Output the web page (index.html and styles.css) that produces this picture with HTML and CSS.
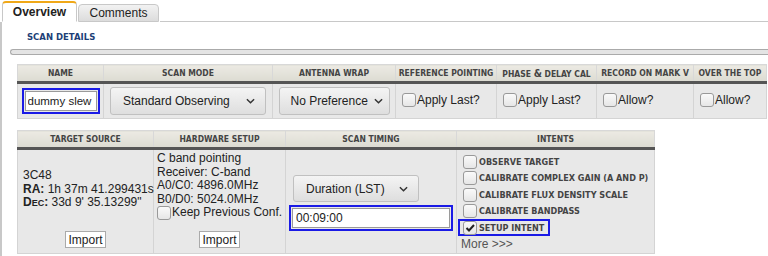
FILE: index.html
```html
<!DOCTYPE html>
<html lang="en">
<head>
  <meta charset="UTF-8">
  <title>Scan Details</title>
  <link rel="stylesheet" href="styles.css">
</head>
<body>
  <div class="tabs">
    <div class="tab active">Overview</div>
    <div class="tab">Comments</div>
    <div class="tab-rest"></div>
  </div>

  <div class="panel">
    <h2 class="section-title">SCAN DETAILS</h2>
    <div class="rule"></div>

    <table class="grid grid-top">
      <colgroup>
        <col style="width:86px"><col style="width:169px"><col style="width:123px"><col style="width:101px">
        <col style="width:100px"><col style="width:97px"><col style="width:73px">
      </colgroup>
      <tr>
        <th>Name</th>
        <th>Scan Mode</th>
        <th>Antenna Wrap</th>
        <th>Reference Pointing</th>
        <th>Phase <span class="amp">&amp;</span> Delay Cal</th>
        <th>Record on Mark V</th>
        <th>Over the Top</th>
      </tr>
      <tr class="row-top">
        <td class="center">
          <span class="focus"><input class="text name-input" type="text" value="dummy slew"></span>
        </td>
        <td class="center"><span class="select wide">Standard Observing <svg class="chev" viewBox="0 0 10 6"><polyline points="1,1 5,5 9,1"/></svg></span></td>
        <td class="center"><span class="select narrow">No Preference <svg class="chev" viewBox="0 0 10 6"><polyline points="1,1 5,5 9,1"/></svg></span></td>
        <td class="opt"><label class="check"><span class="box"></span>Apply Last?</label></td>
        <td class="opt"><label class="check"><span class="box"></span>Apply Last?</label></td>
        <td class="opt"><label class="check"><span class="box"></span>Allow?</label></td>
        <td class="opt"><label class="check"><span class="box"></span>Allow?</label></td>
      </tr>
    </table>

    <table class="grid grid-bottom">
      <colgroup>
        <col style="width:136px"><col style="width:132px"><col style="width:171px"><col style="width:198px">
      </colgroup>
      <tr>
        <th>Target Source</th>
        <th>Hardware Setup</th>
        <th>Scan Timing</th>
        <th>Intents</th>
      </tr>
      <tr class="row-bottom">
        <td>
          <div class="cell-col">
            <div class="info source">
              3C48<br>
              <b>RA:</b> 1h 37m 41.299431s<br>
              <b>D<span class="sc">EC</span>:</b> 33d 9' 35.13299"
            </div>
            <button class="import">Import</button>
          </div>
        </td>
        <td>
          <div class="cell-col">
            <div class="info">
              C band pointing<br>
              Receiver: C-band<br>
              A0/C0: 4896.0MHz<br>
              B0/D0: 5024.0MHz<br>
              <label class="check"><span class="box"></span>Keep Previous Conf.</label>
            </div>
            <button class="import">Import</button>
          </div>
        </td>
        <td>
          <div class="timing">
            <span class="select timing-select">Duration (LST) <svg class="chev" viewBox="0 0 10 6"><polyline points="1,1 5,5 9,1"/></svg></span>
            <span class="focus time-focus"><input class="text time-input" type="text" value="00:09:00"></span>
          </div>
        </td>
        <td>
          <ul class="intents">
            <li><span class="box"></span>Observe Target</li>
            <li><span class="box"></span>Calibrate Complex Gain (A and P)</li>
            <li><span class="box"></span>Calibrate Flux Density Scale</li>
            <li><span class="box"></span>Calibrate Bandpass</li>
            <li class="selected"><span class="box checked"><svg viewBox="0 0 12 12"><polyline points="2.5,6 5,8.5 10,3"/></svg></span>Setup Intent</li>
          </ul>
          <div class="more">More &gt;&gt;&gt;</div>
        </td>
      </tr>
    </table>
  </div>
</body>
</html>
```

FILE: styles.css
```css
body {
  margin: 0;
  font-family: 'Liberation Sans', Arial, sans-serif;
  font-size: 12px;
  color: #222;
  background: #fff;
  width: 768px;
  height: 256px;
  overflow: hidden;
}

/* tabs */
.tabs {
  display: flex;
  align-items: flex-end;
  height: 22px;
  padding-left: 2px;
}
.tab {
  box-sizing: border-box;
  width: 81px;
  height: 18px;
  line-height: 17px;
  border: 1px solid #c8c8c8;
  border-radius: 4px 4px 0 0;
  background: linear-gradient(#f2f2f2, #dcdcdc);
  font-size: 12px;
  color: #222;
  text-align: center;
  margin-right: 1px;
}
.tab.active {
  width: 75px;
  height: 21px;
  line-height: 19px;
  background: #fff;
  border-top: 2px solid #f0a818;
  border-bottom: 1px solid #fff;
  font-weight: bold;
}
.tab-rest {
  flex: 1;
  border-bottom: 1px solid #c8c8c8;
}

.panel {
  border-left: 2px solid #c8c8c8;
  height: 234px;
}

.section-title {
  margin: 0;
  padding: 8px 0 0 25px;
  height: 14px;
  line-height: 14px;
  font-family: 'DejaVu Sans', sans-serif;
  font-size: 8.5px;
  font-weight: bold;
  color: #1d3f77;
}

.rule {
  margin: 5px 0 0 8px;
  height: 4px;
  border: 1px solid #aaa;
  border-right: none;
  border-radius: 3px 0 0 3px;
  background: #e4e4e4;
}

/* tables */
.grid {
  border-collapse: collapse;
  table-layout: fixed;
  margin-left: 15px;
  background: #e8e8e8;
}
.grid-top {
  margin-top: 9px;
  width: 749px;
}
.grid-bottom {
  margin-top: 11px;
  width: 637px;
}
.grid th {
  height: 16px;
  padding: 0;
  font-family: 'DejaVu Sans Condensed', 'DejaVu Sans', sans-serif;
  font-size: 8.5px;
  font-weight: bold;
  text-transform: uppercase;
  color: #444;
  background: linear-gradient(#eceae3, #dcdbd2);
  border: 1px solid #d8d8d8;
  border-bottom: 3px solid #555;
  white-space: nowrap;
}
.grid th .amp {
  font-size: 10.5px;
}
.grid td {
  border: 1px solid #d4d4d4;
  padding: 0 2px;
  vertical-align: middle;
}
.row-top td {
  height: 34px;
}
.row-top td.opt {
  padding-left: 6px;
}
.center {
  text-align: center;
}

/* inputs */
.focus {
  display: inline-block;
  border: 2px solid #1a1ae6;
  padding: 1px;
  vertical-align: middle;
}
.text {
  display: block;
  box-sizing: border-box;
  height: 20px;
  margin: 0;
  padding: 0 3px;
  border: 1px solid #9a9a9a;
  background: #fff;
  font-family: 'Liberation Sans', Arial, sans-serif;
  font-size: 12px;
  color: #222;
  outline: none;
}
.name-input {
  width: 72px;
  padding: 0 2px;
  font-size: 11.5px;
}

.select {
  display: inline-flex;
  align-items: center;
  justify-content: space-between;
  gap: 8px;
  box-sizing: border-box;
  height: 28px;
  padding: 0 10px 0 12px;
  border: 1px solid #c0c0c0;
  border-radius: 3px;
  background: linear-gradient(#f4f4f4, #dedede);
  font-size: 12px;
  color: #222;
  white-space: nowrap;
  vertical-align: middle;
}
.select.wide {
  width: 156px;
}
.select.narrow {
  width: 111px;
  gap: 4px;
  padding: 0 6px 0 11px;
}
.chev {
  flex-shrink: 0;
  width: 9px;
  height: 6px;
  fill: none;
  stroke: #333;
  stroke-width: 1.6;
}

.check {
  display: inline-flex;
  align-items: center;
  font-size: 12px;
  color: #222;
  white-space: nowrap;
}
.box {
  display: inline-block;
  flex-shrink: 0;
  width: 12px;
  height: 12px;
  margin-right: 1px;
  border: 1px solid #999;
  border-radius: 3px;
  background: linear-gradient(#fafafa, #e6e6e6);
}

/* bottom row */
.row-bottom td {
  height: 103px;
  vertical-align: top;
}
.cell-col {
  display: flex;
  flex-direction: column;
  align-items: center;
  justify-content: space-between;
  height: 103px;
}
.info {
  align-self: flex-start;
  padding: 2px 0 0 1px;
  line-height: 13.5px;
  white-space: nowrap;
}
.info.source {
  padding: 19px 0 0 3px;
}
.sc {
  font-size: 9px;
}
.import {
  height: 17px;
  margin-bottom: 5px;
  padding: 0 2px;
  border: 1px solid #aaa;
  border-radius: 0;
  background: #fff;
  font-family: 'Liberation Sans', Arial, sans-serif;
  font-size: 12px;
  color: #222;
}

.timing {
  display: flex;
  flex-direction: column;
  align-items: flex-start;
  gap: 3px;
  padding-top: 25px;
}
.timing-select {
  width: 126px;
  height: 27px;
  margin-left: 5px;
}
.time-focus {
  margin-left: 1px;
}
.time-input {
  width: 158px;
}

.intents {
  list-style: none;
  margin: 0;
  padding: 4px 0 0 4px;
}
.intents li {
  display: flex;
  align-items: center;
  height: 16.3px;
  font-family: 'DejaVu Sans Condensed', 'DejaVu Sans', sans-serif;
  font-size: 9px;
  font-weight: bold;
  text-transform: uppercase;
  color: #444;
}
.intents li .box {
  margin-right: 2px;
}
.intents li.selected {
  box-sizing: border-box;
  width: 92px;
  height: 17px;
  margin-left: -5px;
  padding-left: 3px;
  border: 2px solid #1a1ae6;
}
.box.checked svg {
  display: block;
  width: 12px;
  height: 12px;
  fill: none;
  stroke: #222;
  stroke-width: 2;
}
.more {
  padding: 1px 0 0 2px;
  font-size: 12px;
  color: #555;
}
```
